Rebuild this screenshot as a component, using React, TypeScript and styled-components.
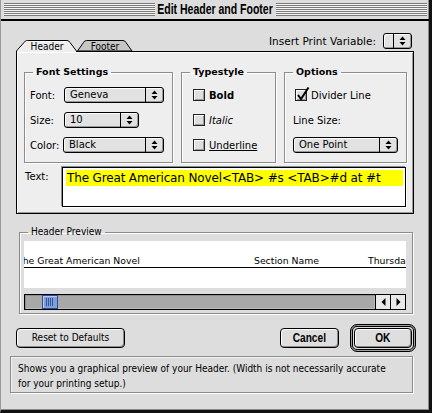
import React from 'react';
import styled, { createGlobalStyle } from 'styled-components';

const UI = '"DejaVu Sans", "Liberation Sans", sans-serif';
const COND = '"DejaVu Sans Condensed", "DejaVu Sans", "Liberation Sans", sans-serif';
const HEAVY = '"Liberation Sans", Arial, sans-serif';

const Global = createGlobalStyle`
  html, body { margin: 0; padding: 0; background: #ffffff; }
  body { font-family: ${UI}; font-size: 10px; color: #000; }
  * { box-sizing: border-box; }
`;

const Window = styled.div`
  width: 432px;
  height: 413px;
  background: #dddddd;
  border-left: 1px solid #9a9a9a;
  border-right: 3px solid #111;
  border-bottom: 3px solid #111;
  box-shadow: inset -1px -1px 0 #8a8a8a;
  display: flex;
  flex-direction: column;
  overflow: hidden;
`;

const TitleBar = styled.div`
  height: 21px;
  flex: none;
  border-bottom: 2px solid #000;
  display: flex;
  align-items: center;
  gap: 3px;
  padding: 0 2px 0 3px;
`;

const Stripes = styled.div`
  flex: 1;
  height: 13px;
  background: repeating-linear-gradient(to bottom, #7a7a7a 0 1px, #f6f6f6 1px 2px);
`;

const Title = styled.div`
  width: 115px;
  flex: none;
  display: flex;
  justify-content: center;
  line-height: 19px;
`;

const Squeezed = styled.span<{ $size: number; $scale: number }>`
  display: inline-block;
  font-family: ${HEAVY};
  font-weight: bold;
  font-size: ${(p) => p.$size}px;
  transform: scaleX(${(p) => p.$scale});
  white-space: nowrap;
`;

const Body = styled.div`
  flex: 1;
  display: flex;
  flex-direction: column;
  padding: 0 15px 0 9px;
`;

const TabRow = styled.div`
  height: 30px;
  margin-left: 6px;
  display: flex;
  align-items: flex-end;
  justify-content: space-between;
`;

const Tabs = styled.div`
  display: flex;
  align-items: flex-end;
`;

const Tab = styled.div<{ $w: number; $h: number; $selected?: boolean }>`
  position: relative;
  width: ${(p) => p.$w}px;
  height: ${(p) => p.$h}px;
  margin-bottom: ${(p) => (p.$selected ? -1 : 0)}px;
  margin-left: ${(p) => (p.$selected ? 0 : -1)}px;
  z-index: ${(p) => (p.$selected ? 2 : 1)};
  display: flex;
  justify-content: center;
  align-items: flex-start;
`;

const TabShape = styled.svg`
  position: absolute;
  inset: 0;
`;

const TabLabel = styled.span<{ $top: number }>`
  position: relative;
  margin-top: ${(p) => p.$top}px;
  font-family: ${COND};
  font-size: 10px;
  line-height: 10px;
`;

const InsertVar = styled.div`
  align-self: flex-start;
  margin-top: 12px;
  margin-right: 2px;
  display: flex;
  align-items: center;
  gap: 7px;
`;

const Label = styled.span<{ $w?: number; $size?: number }>`
  font-size: ${(p) => p.$size ?? 10}px;
  white-space: nowrap;
  width: ${(p) => (p.$w ? `${p.$w}px` : 'auto')};
  flex: none;
`;

const Panel = styled.div`
  height: 163px;
  margin-left: 6px;
  background: #eeeeee;
  border: 1px solid #000;
  box-shadow: inset 1px 1px 0 #ffffff, inset -1px -1px 0 #9a9a9a;
  display: flex;
  flex-direction: column;
`;

const GroupsRow = styled.div`
  display: flex;
  gap: 8px;
  padding: 14px 0 0 7px;
`;

const Group = styled.fieldset<{ $w: number; $h?: number }>`
  margin: 0;
  padding: 0;
  min-inline-size: 0;
  width: ${(p) => p.$w}px;
  height: ${(p) => (p.$h ? `${p.$h}px` : 'auto')};
  border: 1px solid #8c8c8c;
  box-shadow: 1px 1px 0 #ffffff, inset 1px 1px 0 #ffffff;
`;

const GroupTitle = styled.legend<{ $bold?: boolean }>`
  margin-left: 8px;
  padding: 0 3px;
  line-height: 12px;
  font-weight: ${(p) => (p.$bold ? 'bold' : 'normal')};
  font-size: ${(p) => (p.$bold ? 9.5 : 10)}px;
  font-family: ${(p) => (p.$bold ? UI : COND)};
`;

const GroupBody = styled.div<{ $pl: number }>`
  display: flex;
  flex-direction: column;
  gap: 9px;
  padding: 9px 0 0 ${(p) => p.$pl}px;
`;

const Row = styled.div<{ $indent?: number }>`
  height: 16px;
  display: flex;
  align-items: center;
  padding-left: ${(p) => p.$indent ?? 0}px;
`;

const PopupBox = styled.div<{ $w: number }>`
  width: ${(p) => p.$w}px;
  height: 16px;
  flex: none;
  border: 1px solid #000;
  border-radius: 3px;
  background: #e2e2e2;
  box-shadow: inset 1px 1px 0 #ffffff, inset -1px -1px 0 #9a9a9a;
  display: flex;
  align-items: stretch;
`;

const PopupText = styled.span`
  flex: 1;
  padding-left: 5px;
  font-size: 10px;
  line-height: 14px;
  white-space: nowrap;
  overflow: hidden;
`;

const PopupArrows = styled.span<{ $w: number }>`
  width: ${(p) => p.$w}px;
  flex: none;
  border-left: 1px solid #000;
  display: flex;
  align-items: center;
  justify-content: center;
`;

const UpDown = () => (
  <svg width="7" height="10" viewBox="0 0 7 10">
    <path d="M3.5 0.5 L6.5 4 L0.5 4 Z M0.5 6 L6.5 6 L3.5 9.5 Z" fill="#000" />
  </svg>
);

const Popup = ({ w, arrow = 18, text }: { w: number; arrow?: number; text?: string }) => (
  <PopupBox $w={w}>
    <PopupText>{text}</PopupText>
    <PopupArrows $w={arrow}>
      <UpDown />
    </PopupArrows>
  </PopupBox>
);

const CheckBox = styled.span`
  position: relative;
  width: 12px;
  height: 12px;
  flex: none;
  border: 1px solid #222;
  background: #dedede;
  box-shadow: inset 1px 1px 0 #ffffff, inset -1px -1px 0 #9a9a9a;
`;

const CheckMark = styled.svg`
  position: absolute;
  left: 0;
  top: -4px;
`;

const CheckLabel = styled.span<{ $style?: 'bold' | 'italic' | 'underline' }>`
  margin-left: 4px;
  font-size: 10px;
  white-space: nowrap;
  font-weight: ${(p) => (p.$style === 'bold' ? 'bold' : 'normal')};
  font-style: ${(p) => (p.$style === 'italic' ? 'italic' : 'normal')};
  text-decoration: ${(p) => (p.$style === 'underline' ? 'underline' : 'none')};
`;

const Check = ({
  label,
  checked,
  variant,
  indent,
}: {
  label: string;
  checked?: boolean;
  variant?: 'bold' | 'italic' | 'underline';
  indent?: number;
}) => (
  <Row $indent={indent}>
    <CheckBox>
      {checked && (
        <CheckMark width="14" height="15" viewBox="0 0 14 15">
          <path d="M2 9 L5 13 L12.5 1.5" stroke="#000" strokeWidth="2" fill="none" />
        </CheckMark>
      )}
    </CheckBox>
    <CheckLabel $style={variant}>{label}</CheckLabel>
  </Row>
);

const TextRow = styled.div`
  display: flex;
  margin-top: 4px;
  padding-left: 8px;
`;

const TextLabel = styled.span`
  width: 37px;
  padding-top: 4px;
  font-size: 10px;
  line-height: 12px;
`;

const TextField = styled.div`
  width: 344px;
  height: 40px;
  border: 1px solid #000;
  background: #ffffff;
  box-shadow: -1px -1px 0 #8c8c8c, 1px 1px 0 #ffffff;
  padding: 2px 2px 0 3px;
`;

const Highlight = styled.div`
  height: 16px;
  background: #ffff00;
  font-size: 12px;
  letter-spacing: -0.15px;
  line-height: 16px;
  padding-left: 1px;
  white-space: nowrap;
`;

const PreviewGroup = styled(Group)`
  margin: 12px 0 0 9px;
`;

const PreviewBody = styled.div`
  padding: 3px 0 3px 4px;
  display: flex;
  flex-direction: column;
  gap: 6px;
`;

const PreviewPaper = styled.div`
  width: 382px;
  height: 47px;
  background: #ffffff;
  overflow: hidden;
`;

const PreviewLine = styled.div`
  height: 27px;
  display: flex;
  align-items: flex-end;
  padding-bottom: 1px;
  border-bottom: 1px solid #000;
  margin-left: -7px;
`;

const PreviewText = styled.span<{ $w?: number }>`
  flex: none;
  width: ${(p) => (p.$w ? `${p.$w}px` : 'auto')};
  font-size: 9.3px;
  line-height: 11px;
  white-space: nowrap;
`;

const ScrollBar = styled.div`
  width: 382px;
  height: 16px;
  border: 1px solid #000;
  display: flex;
`;

const Track = styled.div`
  flex: 1;
  background: #a8a8a8;
  box-shadow: inset 1px 1px 0 #8e8e8e, inset -1px -1px 0 #bcbcbc;
  display: flex;
`;

const Thumb = styled.div`
  width: 16px;
  margin-left: 17px;
  background: #7f9edb;
  border: 1px solid #2f4f93;
  box-shadow: inset 1px 1px 0 #b7caf0;
  display: flex;
  align-items: center;
  justify-content: center;
`;

const ArrowBox = styled.div`
  width: 15px;
  flex: none;
  border-left: 1px solid #000;
  background: #e8e8e8;
  display: flex;
  align-items: center;
  justify-content: center;
`;

const ButtonRow = styled.div`
  height: 28px;
  margin-top: 10px;
  display: flex;
  align-items: center;
`;

const Button = styled.button<{ $w: number; $ml?: number }>`
  width: ${(p) => p.$w}px;
  height: 20px;
  margin-left: ${(p) => p.$ml ?? 0}px;
  padding: 0;
  border: 1px solid #000;
  border-radius: 4px;
  background: #dedede;
  box-shadow: inset 1px 1px 0 #ffffff, inset -1px -1px 0 #8a8a8a;
  color: #000;
  font-family: ${COND};
  font-size: 10px;
  line-height: 18px;
  display: flex;
  align-items: center;
  justify-content: center;
`;

const Spacer = styled.div`
  flex: 1;
`;

const DefaultRing = styled.div`
  margin-left: 11px;
  margin-right: -2px;
  padding: 3px;
  border: 1px solid #000;
  border-radius: 7px;
  box-shadow: inset 0 0 0 1px #a0a0a0, inset 0 0 0 2px #000;
  display: flex;
`;

const HelpBox = styled.div`
  height: 37px;
  margin: 4px 1px 0 0;
  border: 1px solid #8c8c8c;
  box-shadow: inset 1px 1px 0 #f4f4f4, 1px 1px 0 #ffffff;
  padding: 4px 7px;
  font-family: ${COND};
  font-size: 10px;
  line-height: 15px;
  white-space: nowrap;
`;

export default function App() {
  return (
    <>
      <Global />
      <Window>
        <TitleBar>
          <Stripes />
          <Title>
            <Squeezed $size={14} $scale={0.75}>Edit Header and Footer</Squeezed>
          </Title>
          <Stripes />
        </TitleBar>
        <Body>
          <TabRow>
            <Tabs>
              <Tab $w={62} $h={12} $selected>
                <TabShape width="62" height="12" viewBox="0 0 62 12">
                  <path d="M0.5 12 L0.5 11 L8 2.5 Q9.2 0.5 11.5 0.5 L51 0.5 Q53 0.5 54 2.5 L60.5 11 L60.5 12 Z" fill="#eeeeee" />
                  <path d="M0.5 12 L0.5 11 L8 2.5 Q9.2 0.5 11.5 0.5 L51 0.5 Q53 0.5 54 2.5 L60.5 11 L60.5 12" fill="none" stroke="#000" />
                  <path d="M2 11 L9 3 Q10 1.5 12 1.5 L50 1.5" fill="none" stroke="#ffffff" />
                </TabShape>
                <TabLabel $top={2}>Header</TabLabel>
              </Tab>
              <Tab $w={56} $h={11}>
                <TabShape width="56" height="11" viewBox="0 0 56 11">
                  <path d="M0.5 11 L6.5 2.5 Q7.5 0.5 9.5 0.5 L46 0.5 Q48 0.5 49 2.5 L55 11 Z" fill="#c6c6c6" stroke="#000" />
                </TabShape>
                <TabLabel $top={2}>Footer</TabLabel>
              </Tab>
            </Tabs>
            <InsertVar>
              <Label $size={10.5}>Insert Print Variable:</Label>
              <Popup w={29} arrow={18} />
            </InsertVar>
          </TabRow>
          <Panel>
            <GroupsRow>
              <Group $w={149} $h={97}>
                <GroupTitle $bold>Font Settings</GroupTitle>
                <GroupBody $pl={5}>
                  <Row>
                    <Label $w={34}>Font:</Label>
                    <Popup w={100} text="Geneva" />
                  </Row>
                  <Row>
                    <Label $w={34}>Size:</Label>
                    <Popup w={75} arrow={18} text="10" />
                  </Row>
                  <Row>
                    <Label $w={33}>Color:</Label>
                    <Popup w={101} text="Black" />
                  </Row>
                </GroupBody>
              </Group>
              <Group $w={95} $h={97}>
                <GroupTitle $bold>Typestyle</GroupTitle>
                <GroupBody $pl={11}>
                  <Check label="Bold" variant="bold" />
                  <Check label="Italic" variant="italic" />
                  <Check label="Underline" variant="underline" />
                </GroupBody>
              </Group>
              <Group $w={123} $h={97}>
                <GroupTitle $bold>Options</GroupTitle>
                <GroupBody $pl={8}>
                  <Check label="Divider Line" checked indent={2} />
                  <Row>
                    <Label>Line Size:</Label>
                  </Row>
                  <Row>
                    <Popup w={105} text="One Point" />
                  </Row>
                </GroupBody>
              </Group>
            </GroupsRow>
            <TextRow>
              <TextLabel>Text:</TextLabel>
              <TextField>
                <Highlight>The Great American Novel&lt;TAB&gt; #s &lt;TAB&gt;#d at #t</Highlight>
              </TextField>
            </TextRow>
          </Panel>
          <PreviewGroup $w={394}>
            <GroupTitle>Header Preview</GroupTitle>
            <PreviewBody>
              <PreviewPaper>
                <PreviewLine>
                  <PreviewText $w={237}>The Great American Novel</PreviewText>
                  <PreviewText $w={114}>Section Name</PreviewText>
                  <PreviewText>Thursday, June 1, 2000</PreviewText>
                </PreviewLine>
              </PreviewPaper>
              <ScrollBar>
                <Track>
                  <Thumb>
                    <svg width="8" height="8" viewBox="0 0 8 8">
                      <path d="M0.5 0 V8 M2.5 0 V8 M4.5 0 V8 M6.5 0 V8" stroke="#34549a" />
                    </svg>
                  </Thumb>
                </Track>
                <ArrowBox>
                  <svg width="5" height="8" viewBox="0 0 5 8">
                    <path d="M4.5 0 L4.5 8 L0.5 4 Z" fill="#000" />
                  </svg>
                </ArrowBox>
                <ArrowBox>
                  <svg width="5" height="8" viewBox="0 0 5 8">
                    <path d="M0.5 0 L0.5 8 L4.5 4 Z" fill="#000" />
                  </svg>
                </ArrowBox>
              </ScrollBar>
            </PreviewBody>
          </PreviewGroup>
          <ButtonRow>
            <Button $w={109} $ml={6}>Reset to Defaults</Button>
            <Spacer />
            <Button $w={59}>
              <Squeezed $size={13} $scale={0.78}>Cancel</Squeezed>
            </Button>
            <DefaultRing>
              <Button $w={58}>
                <Squeezed $size={13} $scale={0.78}>OK</Squeezed>
              </Button>
            </DefaultRing>
          </ButtonRow>
          <HelpBox>
            Shows you a graphical preview of your Header. (Width is not necessarily accurate
            <br />
            for your printing setup.)
          </HelpBox>
        </Body>
      </Window>
    </>
  );
}
